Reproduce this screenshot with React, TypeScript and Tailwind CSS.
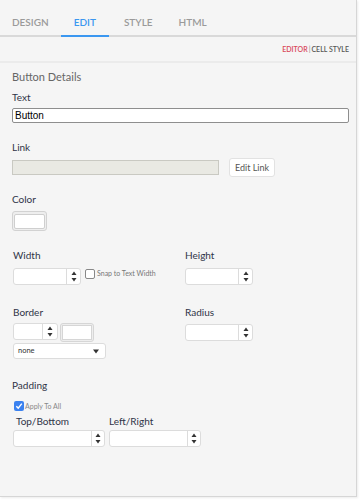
import React from 'react';

const font = { fontFamily: 'Lato, "Open Sans", sans-serif' };

function Spinner({ width, split }: { width: number; split: number }): JSX.Element {
  return (
    <div
      className="flex h-[17px] rounded-[3px] border border-[#dcdcdc] bg-white"
      style={{ width }}
    >
      <div style={{ width: split }} />
      <div className="flex flex-1 flex-col items-center justify-center border-l border-[#dcdcdc] leading-none">
        <svg width="6" height="11" viewBox="0 0 6 11" aria-hidden="true">
          <path d="M3 0.5 L5.5 4 L0.5 4 Z" fill="#333" />
          <path d="M0.5 7 L5.5 7 L3 10.5 Z" fill="#333" />
        </svg>
      </div>
    </div>
  );
}

function Label({ children, className = '' }: { children: React.ReactNode; className?: string }): JSX.Element {
  return <div className={`text-[10px] leading-none text-[#2f3447] ${className}`}>{children}</div>;
}

export default function App(): JSX.Element {
  return (
    <div className="h-[500px] w-[361px] bg-white" style={font}>
      <div className="h-[497px] w-[357px] border-r border-b border-[#d6d6d6] bg-[#f5f5f5] shadow-[1px_1px_2px_rgba(0,0,0,0.08)]">
        {/* tabs */}
        <nav className="flex h-[37px] items-end border-b-2 border-[#d9d9d9] text-[10px] font-semibold leading-none text-[#9a9a9a]">
          <div className="ml-[12px] pb-[8px]">DESIGN</div>
          <div className="ml-[12px] -mb-[2px] border-b-2 border-[#3b97f0] px-[13px] pb-[8px] text-[#3b97f0]">EDIT</div>
          <div className="ml-[15px] pb-[8px]">STYLE</div>
          <div className="ml-[26px] pb-[8px]">HTML</div>
        </nav>
        <div className="flex h-[26px] items-center justify-end border-b-2 border-[#ebebeb] pr-[7px] text-[7px] font-semibold">
          <span className="text-[#d9475a]">EDITOR</span>
          <span className="mx-[1px] text-[#999]">|</span>
          <span className="text-[#555]">CELL STYLE</span>
        </div>

        <div className="px-[12px]">
          <div className="mt-[8px] text-[11px] leading-none text-[#666]">Button Details</div>

          <Label className="mt-[10px]">Text</Label>
          <div className="mt-[6px] flex h-[15px] w-[337px] items-center rounded-[2px] border border-[#8e8e8e] bg-white pl-[2px] text-[10px] text-black" style={{ fontFamily: '"Liberation Sans", Arial, sans-serif' }}>
            Button
          </div>

          <Label className="mt-[19px]">Link</Label>
          <div className="mt-[6px] flex items-center gap-[10px]">
            <div className="h-[15px] w-[207px] border border-[#c9c9c2] bg-[#e9e9e3]" />
            <div className="flex h-[19px] items-center rounded-[3px] border border-[#e2e2e2] bg-white px-[5px] text-[9px] text-[#555]">
              Edit Link
            </div>
          </div>

          <Label className="mt-[17px]">Color</Label>
          <div className="mt-[7px] flex h-[20px] w-[35px] items-center justify-center rounded-[3px] border border-[#d2d2d2] bg-[#eeeeee]">
            <div className="h-[15px] w-[31px] rounded-[2px] border border-[#cfcfcf] bg-white" />
          </div>

          <div className="mt-[19px] flex pl-[1px]">
            <div className="w-[172px]">
              <Label>Width</Label>
              <div className="mt-[8px] flex items-start">
                <Spinner width={68} split={52} />
                <div className="ml-[4px] mt-[1px] h-[10px] w-[10px] rounded-[2px] border border-[#888] bg-white" />
                <span className="ml-[2px] mt-[2px] text-[7px] leading-none text-[#777]">Snap to Text Width</span>
              </div>
            </div>
            <div>
              <Label>Height</Label>
              <div className="mt-[8px]">
                <Spinner width={68} split={52} />
              </div>
            </div>
          </div>

          <div className="mt-[22px] flex pl-[1px]">
            <div className="w-[172px]">
              <Label>Border</Label>
              <div className="mt-[6px] flex gap-[2px]">
                <Spinner width={45} split={28} />
                <div className="flex h-[19px] w-[34px] items-center justify-center rounded-[3px] border border-[#d6d6d6] bg-[#eeeeee]">
                  <div className="h-[15px] w-[30px] border border-[#d6d6d6] bg-white" />
                </div>
              </div>
              <div className="mt-[1px] flex h-[16px] w-[93px] items-center justify-between rounded-[3px] border border-[#dcdcdc] bg-white pl-[4px] pr-[6px] text-[7.5px] text-[#333]">
                <span>none</span>
                <svg width="6" height="5" viewBox="0 0 6 5" aria-hidden="true">
                  <path d="M0 0.5 L6 0.5 L3 4.5 Z" fill="#333" />
                </svg>
              </div>
            </div>
            <div>
              <Label>Radius</Label>
              <div className="mt-[7px]">
                <Spinner width={68} split={52} />
              </div>
            </div>
          </div>

          <Label className="mt-[21px]">Padding</Label>
          <div className="mt-[10px] flex items-center pl-[2px]">
            <div className="flex h-[10px] w-[10px] items-center justify-center rounded-[2px] bg-[#3b82f0]">
              <svg width="8" height="8" viewBox="0 0 8 8" aria-hidden="true">
                <path d="M1.3 4.2 L3.2 6.1 L6.8 1.6" stroke="white" strokeWidth="1.4" fill="none" />
              </svg>
            </div>
            <span className="ml-[1px] mt-[1px] text-[7px] text-[#888]">Apply To All</span>
          </div>

          <div className="mt-[4px] flex gap-[4px] pl-[1px]">
            <div>
              <Label className="pl-[3px]">Top/Bottom</Label>
              <div className="mt-[4px]">
                <Spinner width={92} split={77} />
              </div>
            </div>
            <div>
              <Label>Left/Right</Label>
              <div className="mt-[4px]">
                <Spinner width={92} split={77} />
              </div>
            </div>
          </div>
        </div>
      </div>
    </div>
  );
}
